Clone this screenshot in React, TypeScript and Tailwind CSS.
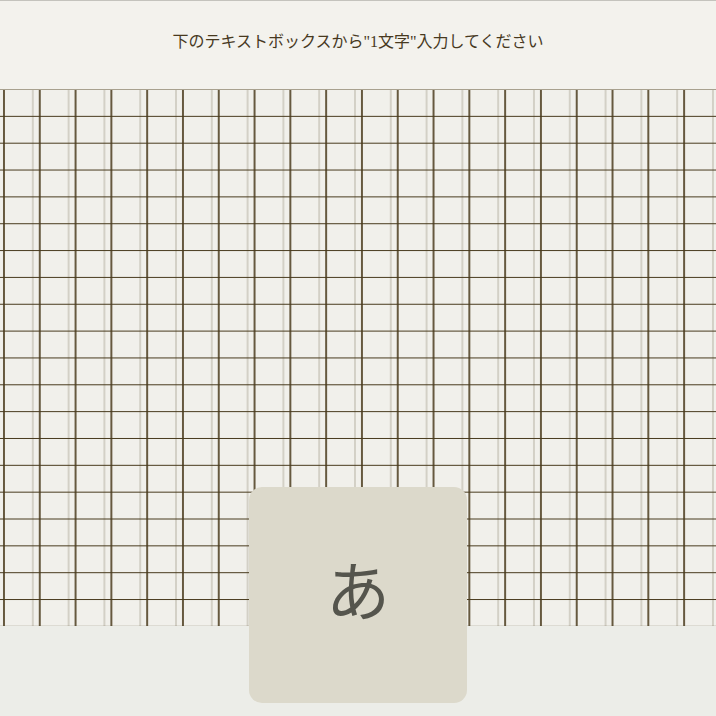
export default function App() {
  return (
    <main className="min-h-screen w-full bg-[#ecede8] border-t border-[#c4c3bd] font-['Liberation_Serif','Noto_Sans_CJK_JP',serif]">
      {/* HEADER */}
      <header className="h-[88px] bg-[#f3f2ed] pt-[29px] text-center">
        <p className="text-[16px] leading-6 text-[#47391f]">
          下のテキストボックスから"1文字"入力してください
        </p>
      </header>
      {/* HEADER */}
      {/* MANUSCRIPT GRID */}
      <section className="h-[537px] w-full border-t border-[#a8a18f] bg-[#f1f0eb] bg-[image:linear-gradient(to_bottom,transparent_25.45px,#47391c_25.45px),linear-gradient(to_right,transparent_3.4px,#66593f_3.4px,#66593f_4.6px,transparent_4.6px,transparent_32.3px,#d3d0c6_32.3px,#d3d0c6_33.9px,transparent_33.9px)] bg-[size:100%_26.85px,35.8px_100%]" />
      {/* MANUSCRIPT GRID */}
      {/* INPUT CARD */}
      <div className="relative z-10 mx-auto -mt-[139px] flex h-[216px] w-[218px] items-center justify-center rounded-[13px] bg-[#dcd9cb] pb-[16px]">
        <span className="font-['Noto_Sans_CJK_JP',sans-serif] text-[64px] leading-none text-[#55554d]">
          あ
        </span>
      </div>
      {/* INPUT CARD */}
    </main>
  );
}
